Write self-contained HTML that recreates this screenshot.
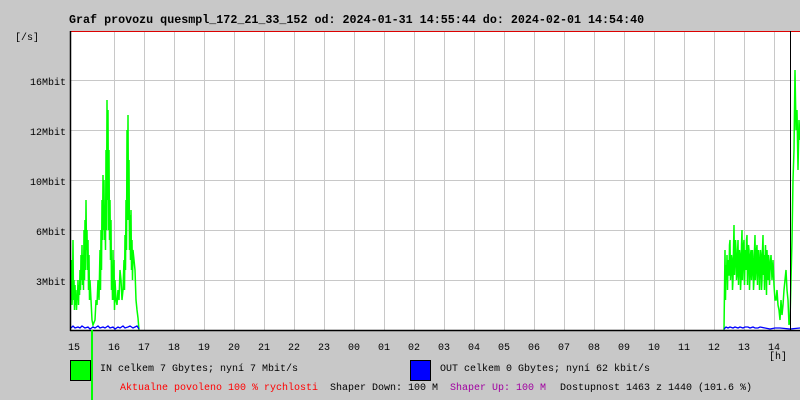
<!DOCTYPE html><html><head><style>
body{margin:0;width:800px;height:400px;background:#c8c8c8;overflow:hidden;font-family:"Liberation Mono",monospace}
svg{position:absolute;left:0;top:0}
text{font-family:"Liberation Mono",monospace;font-size:10px;fill:#000}
</style></head><body>
<svg width="800" height="400" viewBox="0 0 800 400">
<rect x="70" y="31" width="730" height="299" fill="#fff"/>
<g stroke="#c8c8c8" stroke-width="1">
<line x1="114.5" y1="31" x2="114.5" y2="330"/><line x1="144.5" y1="31" x2="144.5" y2="330"/><line x1="174.5" y1="31" x2="174.5" y2="330"/><line x1="204.5" y1="31" x2="204.5" y2="330"/><line x1="234.5" y1="31" x2="234.5" y2="330"/><line x1="264.5" y1="31" x2="264.5" y2="330"/><line x1="294.5" y1="31" x2="294.5" y2="330"/><line x1="324.5" y1="31" x2="324.5" y2="330"/><line x1="354.5" y1="31" x2="354.5" y2="330"/><line x1="384.5" y1="31" x2="384.5" y2="330"/><line x1="414.5" y1="31" x2="414.5" y2="330"/><line x1="444.5" y1="31" x2="444.5" y2="330"/><line x1="474.5" y1="31" x2="474.5" y2="330"/><line x1="504.5" y1="31" x2="504.5" y2="330"/><line x1="534.5" y1="31" x2="534.5" y2="330"/><line x1="564.5" y1="31" x2="564.5" y2="330"/><line x1="594.5" y1="31" x2="594.5" y2="330"/><line x1="624.5" y1="31" x2="624.5" y2="330"/><line x1="654.5" y1="31" x2="654.5" y2="330"/><line x1="684.5" y1="31" x2="684.5" y2="330"/><line x1="714.5" y1="31" x2="714.5" y2="330"/><line x1="744.5" y1="31" x2="744.5" y2="330"/><line x1="774.5" y1="31" x2="774.5" y2="330"/>
<line x1="70" y1="80.5" x2="800" y2="80.5"/><line x1="70" y1="130.5" x2="800" y2="130.5"/><line x1="70" y1="180.5" x2="800" y2="180.5"/><line x1="70" y1="230.5" x2="800" y2="230.5"/><line x1="70" y1="280.5" x2="800" y2="280.5"/>
</g>
<line x1="70" y1="31.5" x2="800" y2="31.5" stroke="#d00" stroke-width="1"/>
<polyline fill="none" stroke="#00ff00" stroke-width="1.5" points="71,300 71.5,260 72,305 72.5,290 73,240 73.5,300 74,280 74.5,310 75,285 75.5,305 76,290 76.5,310 77,295 77.5,300 78,280 78.5,305 79,285 79.5,295 80,270 80.5,290 81,255 81.5,280 82,245 82.5,285 83,255 83.5,290 84,230 84.5,280 85,220 85.5,270 86,200 86.5,250 87,230 87.5,270 88,240 88.5,290 89,255 89.5,300 90,280 91,300 92,320 93,325 95,320 96,300 97,305 98,280 99,300 100,250 100.5,290 101,230 101.5,270 102,200 102.5,240 103,175 103.5,230 104,180 104.5,240 105,210 105.5,250 106,150 106.5,230 107,100 107.5,200 108,110 108.5,230 109,150 109.5,240 110,200 110.5,260 111,220 111.5,290 112,270 112.5,300 113,250 113.5,300 114,260 114.5,310 115,280 116,300 117,305 118,290 119,300 120,270 121,280 122,300 123,290 124,260 124.5,290 125,235 125.5,270 126,200 126.5,250 127,130 127.5,220 128,115 128.5,220 129,160 129.5,250 130,215 130.5,260 131,210 131.5,270 132,240 132.5,280 133,250 134,260 135,270 136,300 137,310 138,318 139,330"/>
<polyline fill="none" stroke="#00ff00" stroke-width="1.5" points="724,330 724.5,290 725,250 725.5,300 726,265 726.5,280 727,255 727.5,290 728,260 728.5,275 729,275 729.5,245 730,240 730.5,280 731,270 731.5,255 732,260 732.5,290 733,280 733.5,250 734,225 734.5,275 735,260 735.5,240 736,250 736.5,280 737,275 737.5,255 738,240 738.5,285 739,270 739.5,250 740,255 740.5,290 741,280 741.5,245 742,230 742.5,280 743,265 743.5,245 744,240 744.5,285 745,260 745.5,250 746,270 746.5,240 747,235 747.5,285 748,265 748.5,245 749,250 749.5,290 750,275 750.5,255 751,250 751.5,280 752,270 752.5,250 753,260 753.5,290 754,280 754.5,250 755,235 755.5,280 756,270 756.5,250 757,245 757.5,285 758,265 758.5,250 759,260 759.5,290 760,270 760.5,250 761,255 761.5,290 762,280 762.5,250 763,235 763.5,275 764,255 764.5,290 765,262 765.5,245 766,270 766.5,295 767,250 767.5,270 768,280 768.5,255 769,260 769.5,285 770,270 771,255 772,280 773,260 774,285 775,300 776,300 777,290 778,305 779,310 780,320 781,300 782,315 783,305 784,290 785,280 786,270 787,290 788,300 789,325 790,320 791,280 792,240 793,180 794,150 795,70 796,130 797,110 798,170 799,120 800,140"/>
<polyline fill="none" stroke="#0000ff" stroke-width="1.3" points="71,328 73,326 75,328 78,327 80,328 82,326 85,328 88,327 90,329 93,327 95,328 98,326 100,328 103,327 105,328 108,326 110,328 113,327 115,329 118,327 120,328 123,326 125,328 128,327 130,326 133,328 135,327 137,326 139,329"/>
<polyline fill="none" stroke="#0000ff" stroke-width="1.3" points="724,329 726,327 728,328 730,327 733,328 735,327 738,328 740,327 743,328 745,327 748,327 750,328 753,327 755,328 758,328 760,327 765,328 770,329 775,328 780,328 790,329 800,328"/>
<line x1="70.5" y1="31" x2="70.5" y2="331" stroke="#000" stroke-width="1.5"/>
<line x1="70" y1="330.5" x2="800" y2="330.5" stroke="#000" stroke-width="1.5"/>
<line x1="790.5" y1="31" x2="790.5" y2="330" stroke="#000" stroke-width="1"/>
<line x1="92" y1="330" x2="92" y2="400" stroke="#00ff00" stroke-width="2"/>
<text x="69" y="23" style="font-weight:bold;font-size:11.7px">Graf provozu quesmpl_172_21_33_152 od: 2024-01-31 14:55:44 do: 2024-02-01 14:54:40</text>
<text x="15" y="40">[/s]</text>
<g text-anchor="end"><text x="66" y="85">16Mbit</text><text x="66" y="135">12Mbit</text><text x="66" y="185">10Mbit</text><text x="66" y="235">6Mbit</text><text x="66" y="285">3Mbit</text></g>
<g text-anchor="middle"><text x="74" y="350">15</text><text x="114" y="350">16</text><text x="144" y="350">17</text><text x="174" y="350">18</text><text x="204" y="350">19</text><text x="234" y="350">20</text><text x="264" y="350">21</text><text x="294" y="350">22</text><text x="324" y="350">23</text><text x="354" y="350">00</text><text x="384" y="350">01</text><text x="414" y="350">02</text><text x="444" y="350">03</text><text x="474" y="350">04</text><text x="504" y="350">05</text><text x="534" y="350">06</text><text x="564" y="350">07</text><text x="594" y="350">08</text><text x="624" y="350">09</text><text x="654" y="350">10</text><text x="684" y="350">11</text><text x="714" y="350">12</text><text x="744" y="350">13</text><text x="774" y="350">14</text></g>
<text x="769" y="359">[h]</text>
<rect x="70.5" y="360.5" width="20" height="20" fill="#00ff00" stroke="#000"/>
<rect x="410.5" y="360.5" width="20" height="20" fill="#0000ff" stroke="#000"/>
<text x="100" y="371">IN celkem 7 Gbytes; nyní 7 Mbit/s</text>
<text x="440" y="371">OUT celkem 0 Gbytes; nyní 62 kbit/s</text>
<text x="120" y="390" style="fill:#ff0000">Aktualne povoleno 100 % rychlosti</text>
<text x="330" y="390">Shaper Down: 100 M</text>
<text x="450" y="390" style="fill:#a000a0">Shaper Up: 100 M</text>
<text x="560" y="390">Dostupnost 1463 z 1440 (101.6 %)</text>
</svg>
</body></html>
